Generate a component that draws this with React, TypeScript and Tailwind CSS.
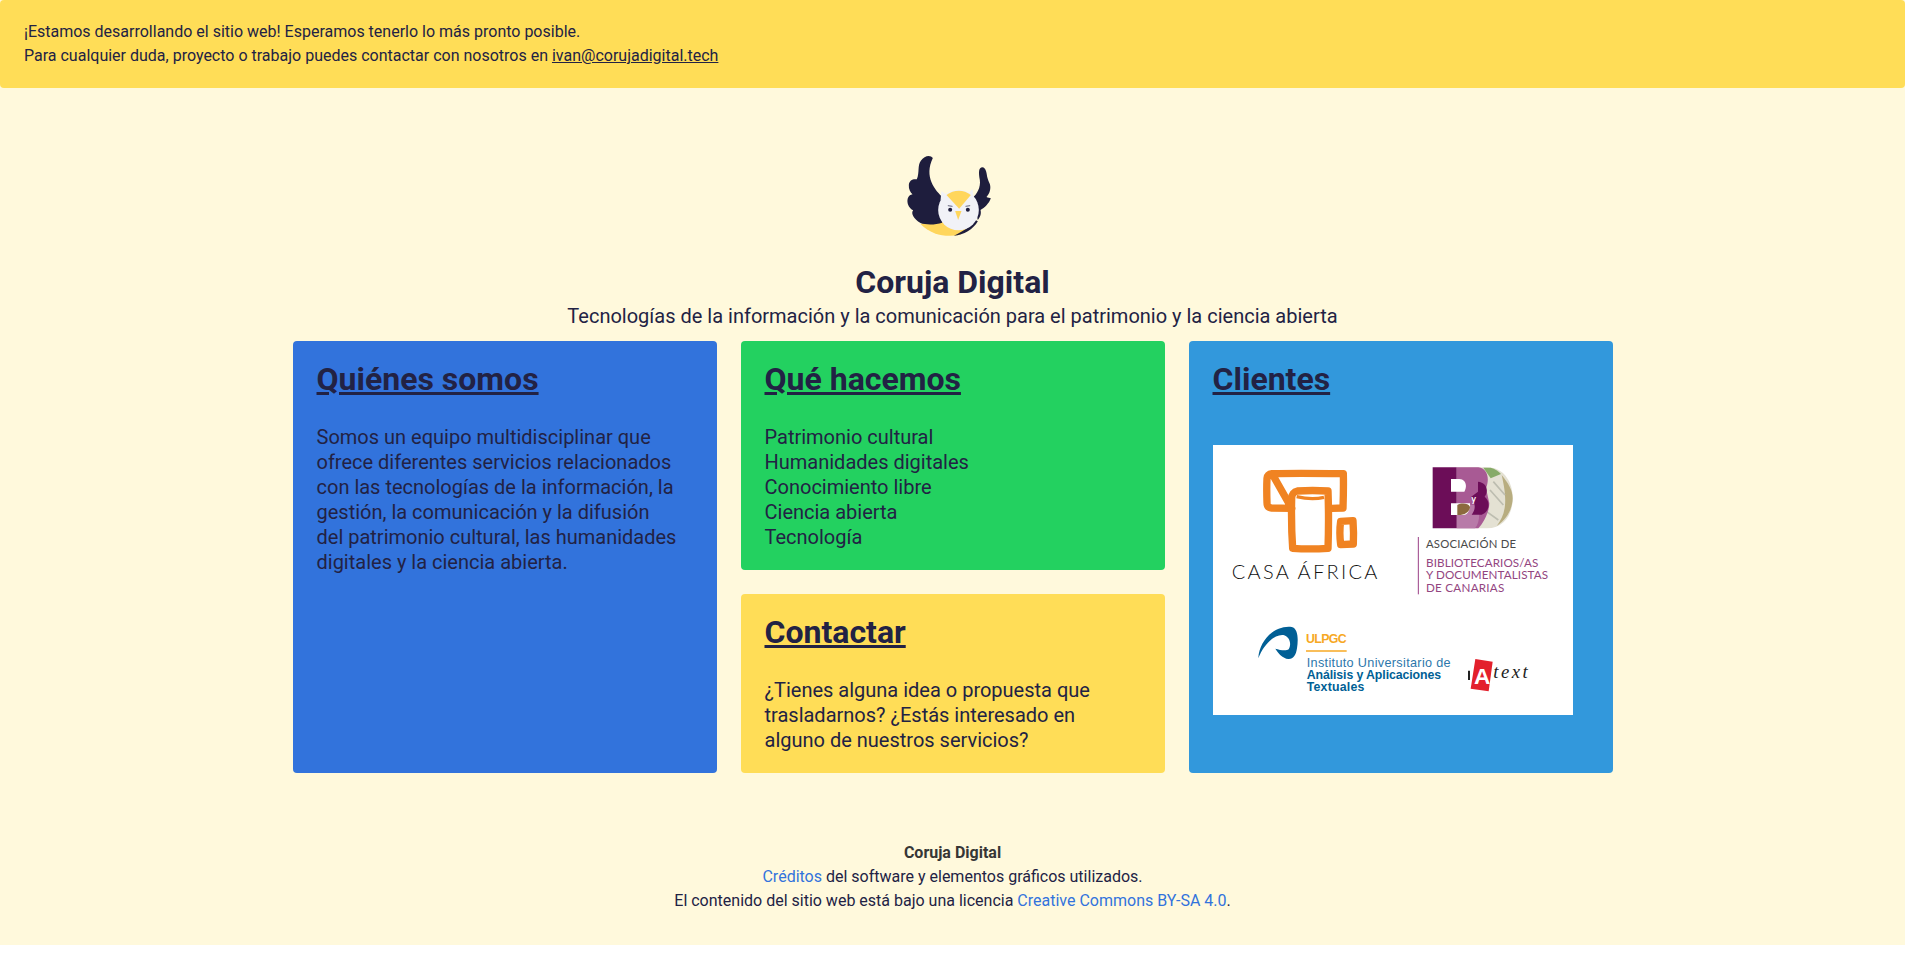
import React from "react";

const Owl = () => (
  <svg viewBox="127.5 60 300 270" className="w-[100px] h-[90px] block" aria-label="Coruja Digital">
    <path d="M180 282C215 318 262 322 300 314L340 270L230 270Z" fill="#ffd65c" />
    <path d="M280 317C310 316 338 298 352 274L345 270C330 290 305 306 280 317Z" fill="#1e1d3d" />
    <path d="M217 84C210 74 192 76 181 92C170 108 178 125 169 148C158 146 146 150 145 165C144 178 150 187 156 193C144 195 138 207 142 222C145 232 152 238 158 241C150 250 160 268 180 279C195 285 225 285 245 278L250 205C222 180 190 140 217 84Z" fill="#1e1d3d" />
    <path d="M366 112C354 112 354 128 358 150C361 172 350 192 335 205L352 270C362 258 362 248 360 240C372 234 386 220 391 205C388 203 382 203 378 201C388 190 392 175 388 162C384 152 382 148 380 140C378 125 375 113 366 112Z" fill="#1e1d3d" />
    <path d="M243 183L262 197L240 210Z" fill="#f1f2f7" />
    <path d="M336 177L318 197L340 207Z" fill="#f1f2f7" />
    <circle cx="294" cy="240" r="61" fill="#f1f2f7" />
    <path d="M258 195C280 178 310 178 331 195L296 236Z" fill="#ffd65c" />
    <path d="M284 243L303 243L293 270Z" fill="#ffd65c" />
    <circle cx="269" cy="239" r="6" fill="#1e1d3d" />
    <circle cx="322" cy="239" r="6" fill="#1e1d3d" />
    <path d="M262 227L276 229M315 229L329 227" stroke="#1e1d3d" strokeWidth="2" fill="none" />
  </svg>
);

// logos image, coordinates follow the 3x crop
const ClientLogos = () => (
  <svg viewBox="39 15 1080 810" className="block w-[360px] h-[270px] bg-white" aria-label="Clientes">
    {/* casa africa */}
    <g fill="none" stroke="#f08322" strokeWidth="22" strokeLinejoin="round">
      <path d="M216 101C280 99 360 100 430 101C431 140 430 175 429 204L395 205M275 205L215 204C204 203 201 198 201 188C200 160 200 135 201 115C202 106 207 102 216 101Z" />
      <path d="M292 153C320 151 355 151 384 153C386 210 386 270 384 325C350 327 310 327 278 325C274 270 274 220 275 175C275 163 282 155 292 153Z" />
      <path d="M422 244L459 242C461 270 461 295 460 312L422 314C419 290 419 265 422 244Z" />
    </g>
    <path d="M290 170C320 177 350 177 372 172" fill="none" stroke="#f08322" strokeWidth="10" />
    <text x="95" y="417" fontFamily="Lato" fontWeight="300" fontSize="60" textLength="437" fill="#111">CASA ÁFRICA</text>

    {/* bd canarias */}
    <path d="M770 82H860C915 82 938 130 938 175C938 220 915 265 860 265H770Z" fill="#e4e1d3" />
    <path d="M905 105C925 130 938 150 938 175C938 200 925 235 890 258C915 225 925 190 905 105Z" fill="#b8ad80" />
    <path d="M850 83H872C885 86 895 93 903 102L872 115Z" fill="#87ab68" />
    <path d="M880 125L915 165M870 150L910 195M860 215L895 240" stroke="#bdbdb0" strokeWidth="5" />
    <path d="M770 82H835C862 85 870 115 858 145L868 190C868 215 850 250 835 265H770Z" fill="#a85a94" />
    <path d="M770 195H835C840 225 838 250 825 265H770Z" fill="#b87aa8" />
    <path d="M698 82H770V265H698Z" fill="#6c0d58" />
    <path d="M753 117H778C795 117 804 135 793 155H753Z M753 190H810C812 205 805 225 790 225H753Z" fill="#fff" />
    <path d="M772 195C785 188 805 190 810 200C810 215 795 226 772 225Z" fill="#8c6a3e" />
    <path d="M834 125C858 127 868 150 854 170C872 185 870 215 845 224L815 224C830 205 825 185 812 172L834 155Z" fill="#6c0d58" />
    <text x="814" y="186" fontFamily="Lato" fontWeight="700" fontSize="27" fill="#fff">y</text>
    <path d="M655 291V463" stroke="#9b3f86" strokeWidth="3" />
    <text x="678" y="324" fontFamily="Lato" fontSize="34" textLength="270" fill="#4a4a4a">ASOCIACIÓN DE</text>
    <g fontFamily="Lato" fontSize="35" fill="#93457f">
      <text x="678" y="380" textLength="337">BIBLIOTECARIOS/AS</text>
      <text x="678" y="418" textLength="366">Y DOCUMENTALISTAS</text>
      <text x="678" y="456" textLength="235">DE CANARIAS</text>
    </g>

    {/* ulpgc */}
    <path d="M175 655C178 600 225 555 275 561C295 565 295 600 291 625C288 645 280 658 265 657C248 655 235 640 226 626C240 630 258 634 266 628C276 610 268 590 250 585C222 582 190 615 175 655Z" fill="#015f95" />
    <text x="318" y="610" fontFamily="Liberation Sans" fontWeight="700" fontSize="37" textLength="122" fill="#f7a823">ULPGC</text>
    <path d="M318 633H440" stroke="#f7a823" strokeWidth="4" />
    <text x="320" y="681" fontFamily="Liberation Sans" fontSize="38" textLength="432" fill="#2d77ab">Instituto Universitario de</text>
    <text x="320" y="717" fontFamily="Liberation Sans" fontWeight="700" fontSize="37" textLength="403" fill="#015f95">Análisis y Aplicaciones</text>
    <text x="320" y="753" fontFamily="Liberation Sans" fontWeight="700" fontSize="37" textLength="173" fill="#015f95">Textuales</text>

    {/* iatext */}
    <path d="M804 692H810V720H804Z" fill="#222" />
    <path d="M826 657L878 665L866 754L812 746Z" fill="#e3202c" />
    <text x="822" y="732" fontFamily="Liberation Sans" fontWeight="700" fontSize="68" fill="#fff">A</text>
    <text x="880" y="714" fontFamily="Liberation Serif" fontStyle="italic" fontSize="56" textLength="103" fill="#222">text</text>
  </svg>
);

const Card = ({ title, className, children }: { title: string; className: string; children: React.ReactNode }) => (
  <div className={`px-6 py-5 rounded ${className}`}>
    <h2 className="text-[32px] leading-[36px] font-bold underline mb-7">{title}</h2>
    {children}
  </div>
);

export default function App() {
  return (
    <div className="bg-[#fff9dc] text-[#222244] text-base leading-6 font-['Roboto',sans-serif]">
      <div className="bg-[#ffdd57] rounded px-6 py-5">
        ¡Estamos desarrollando el sitio web! Esperamos tenerlo lo más pronto posible.
        <br />
        Para cualquier duda, proyecto o trabajo puedes contactar con nosotros en{" "}
        <a className="underline">ivan@corujadigital.tech</a>
      </div>

      <div className="flex flex-col items-center pt-[62px]">
        <Owl />
        <h1 className="text-[32px] leading-[36px] font-bold mt-[24px]">Coruja Digital</h1>
        <p className="text-xl leading-[25px] mt-[4px]">
          Tecnologías de la información y la comunicación para el patrimonio y la ciencia abierta
        </p>
      </div>

      <div className="grid grid-cols-3 gap-6 w-[1320px] mx-auto mt-[12px] text-xl leading-[25px]">
        <Card title="Quiénes somos" className="bg-[#3273dc]">
          <p>
            Somos un equipo multidisciplinar que
            <br />
            ofrece diferentes servicios relacionados
            <br />
            con las tecnologías de la información, la
            <br />
            gestión, la comunicación y la difusión
            <br />
            del patrimonio cultural, las humanidades
            <br />
            digitales y la ciencia abierta.
          </p>
        </Card>

        <div className="flex flex-col gap-6">
          <Card title="Qué hacemos" className="bg-[#23d160]">
            <ul>
              <li>Patrimonio cultural</li>
              <li>Humanidades digitales</li>
              <li>Conocimiento libre</li>
              <li>Ciencia abierta</li>
              <li>Tecnología</li>
            </ul>
          </Card>
          <Card title="Contactar" className="bg-[#ffdd57] flex-1">
            <p>
              ¿Tienes alguna idea o propuesta que
              <br />
              trasladarnos? ¿Estás interesado en
              <br />
              alguno de nuestros servicios?
            </p>
          </Card>
        </div>

        <Card title="Clientes" className="bg-[#3298dc]">
          <div className="pt-5">
            <ClientLogos />
          </div>
        </Card>
      </div>

      <footer className="text-center pt-[68px] pb-[32px]">
        <strong className="font-bold text-[#363636] block">Coruja Digital</strong>
        <div>
          <a className="text-[#3273dc]">Créditos</a> del software y elementos gráficos utilizados.
        </div>
        <div>
          El contenido del sitio web está bajo una licencia{" "}
          <a className="text-[#3273dc]">Creative Commons BY-SA 4.0</a>.
        </div>
      </footer>
    </div>
  );
}
